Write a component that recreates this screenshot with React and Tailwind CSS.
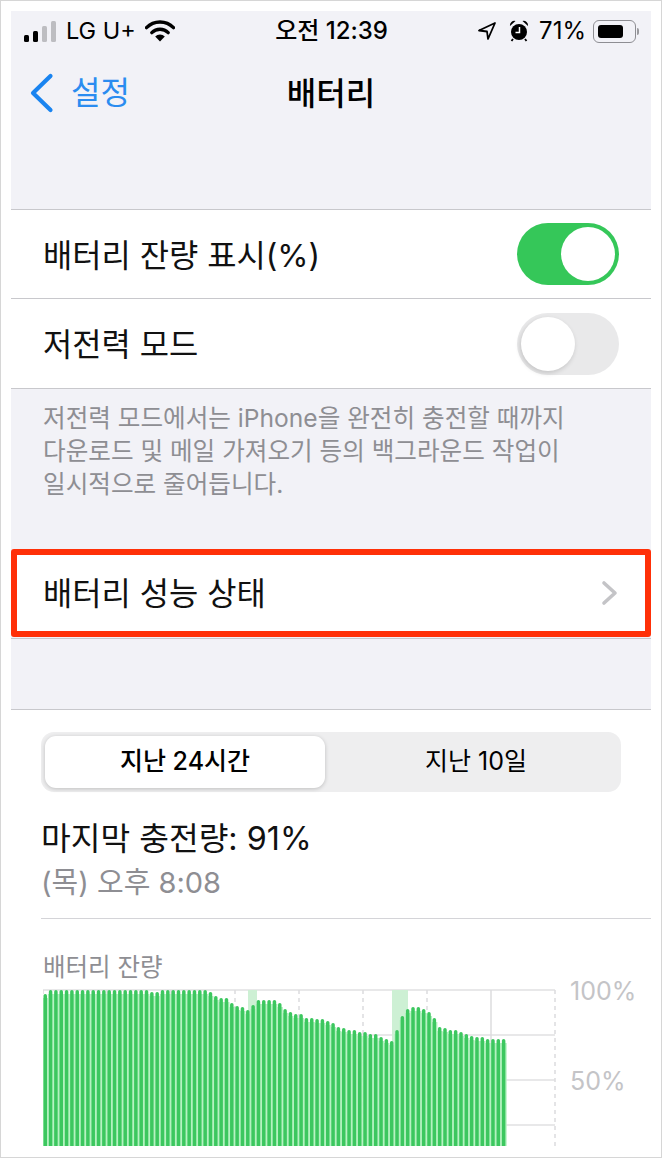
const tops = [995,991,991,991,991,991,991,991,991,991,991,991,991,991,991,991,991,991,991,991,993,993,991,991,991,991,991,991,991,991,991,993,997,999,999,1004,1007,1008,1011,1006,1001,1001,1001,1001,1004,1010,1013,1015,1015,1019,1019,1020,1020,1022,1024,1028,1029,1031,1031,1033,1033,1035,1035,1038,1040,1042,1031,1017,1010,1008,1008,1010,1013,1019,1028,1029,1031,1031,1033,1035,1037,1038,1038,1040,1040,1040,1040];

const BAR_START = 43.5;
const PITCH = 5.33;
const CHART_LEFT = 43;

function Chart() {
  const x = (v) => v - CHART_LEFT;
  const y = (v) => v - 990;
  return (
    <svg width="514" height="157" viewBox="0 0 514 157" className="block">
      {[991, 1036, 1081, 1126].map((v) => (
        <line key={v} x1="0" x2="512" y1={y(v)} y2={y(v)} stroke="#e0e0e2" strokeWidth="1.5" />
      ))}
      {[43, 107, 171, 235, 299, 363, 427, 555].map((v) => (
        <line key={v} x1={x(v)} x2={x(v)} y1="1" y2="157" stroke="#dcdcde" strokeWidth="1.5" strokeDasharray="4 4" />
      ))}
      <line x1={x(491)} x2={x(491)} y1="1" y2="157" stroke="#dcdcde" strokeWidth="1.5" />
      <rect x={x(248)} y="1" width="9" height="156" fill="#cdf0d4" />
      <rect x={x(392)} y="1" width="16" height="156" fill="#cdf0d4" />
      {tops.map((t, i) => (
        <rect key={`g${i}`} x={BAR_START + PITCH * i - CHART_LEFT - 1} y={y(t + 4)} width={PITCH + 0.5} height={1147 - t - 4} fill="#b4f2c0" />
      ))}
      {tops.map((t, i) => (
        <rect key={i} x={BAR_START + PITCH * i - CHART_LEFT} y={y(t)} width="3.5" height={1150 - t} rx="1.7" fill="#3cc75f" />
      ))}
    </svg>
  );
}

function Switch({ on }) {
  return on ? (
    <div className="w-[102px] h-[62px] rounded-full bg-[#35c759] flex items-center justify-end pr-[4px]">
      <div className="w-[54px] h-[54px] rounded-full bg-white" />
    </div>
  ) : (
    <div className="w-[102px] h-[62px] rounded-full bg-[#e9e9ea] flex items-center justify-start pl-[4px]">
      <div className="w-[54px] h-[54px] rounded-full bg-white shadow-[-1px_2px_5px_rgba(0,0,0,0.16)]" />
    </div>
  );
}

function StatusBar() {
  return (
    <div className="h-[44px] pb-[4px] flex items-center justify-between pl-[13px] pr-[12px] text-black text-[23.5px]">
      <div className="flex items-center w-[200px]">
        <svg width="33" height="21" viewBox="0 0 33 21" className="mr-[9px]">
          <rect x="0" y="14" width="5" height="7" rx="1.5" fill="#000" />
          <rect x="9" y="10" width="5" height="11" rx="1.5" fill="#000" />
          <rect x="18" y="5" width="5" height="16" rx="1.5" fill="#bdbdc1" />
          <rect x="27" y="0" width="5" height="21" rx="1.5" fill="#bdbdc1" />
        </svg>
        <span className="leading-none">LG U+</span>
        <svg width="30" height="22" viewBox="0 0 30 22" className="ml-[9px]">
          <path d="M1.5 7.6 A19 19 0 0 1 28.5 7.6" fill="none" stroke="#000" strokeWidth="3.4" strokeLinecap="round" />
          <path d="M6.8 12.6 A11.6 11.6 0 0 1 23.2 12.6" fill="none" stroke="#000" strokeWidth="3.4" strokeLinecap="round" />
          <path d="M15 21.5 L10.2 16.6 A6.8 6.8 0 0 1 19.8 16.6 Z" fill="#000" />
        </svg>
      </div>
      <span className="text-[24px] font-medium leading-none">오전 12:39</span>
      <div className="flex items-center justify-end w-[200px]">
        <svg width="20" height="20" viewBox="0 0 20 20" className="mr-[12px]">
          <path d="M18 2 L2 9.5 L10 10.5 L11 18 Z" fill="none" stroke="#000" strokeWidth="1.8" strokeLinejoin="round" />
        </svg>
        <svg width="20" height="22" viewBox="0 0 20 22" className="mr-[10px]">
          <circle cx="10" cy="12" r="8" fill="#000" />
          <path d="M1 6 A4.5 4.5 0 0 1 6.5 1 Z M19 6 A4.5 4.5 0 0 0 13.5 1 Z" fill="#000" />
          <path d="M4 19 L2.5 21 M16 19 L17.5 21" stroke="#000" strokeWidth="1.8" />
          <path d="M10.5 7 V12.5 H6.5" fill="none" stroke="#fff" strokeWidth="1.5" />
        </svg>
        <span className="text-[24px] leading-none">71%</span>
        <div className="flex items-center ml-[7px]">
          <div className="w-[43px] h-[23px] rounded-[6px] border-[1.5px] border-[#8e8e93] p-[4px]">
            <div className="w-[25px] h-full rounded-[3px] bg-black" />
          </div>
          <div className="w-[2px] h-[7px] ml-[1px] rounded-r-full bg-[#9a9a9e]" />
        </div>
      </div>
    </div>
  );
}

export default function App() {
  return (
    <div
      className="w-[662px] h-[1158px] bg-white border border-[#d6d6d6] pt-[10px] pb-[10px] px-[10px] overflow-hidden"
      style={{ fontFamily: '"Inter", "Noto Sans CJK KR", sans-serif' }}
    >
      <div className="w-[640px] h-[1136px] bg-[#f2f2f7] flex flex-col overflow-hidden">
        <StatusBar />
        <div className="h-[76px] relative flex items-center justify-center pt-[2px]">
          <div className="absolute left-[18px] top-0 bottom-0 flex items-center">
            <svg width="26" height="40" viewBox="0 0 26 40">
              <path d="M21.5 3 L4 20 L21.5 37" fill="none" stroke="#1a84f0" strokeWidth="4.2" strokeLinecap="round" strokeLinejoin="round" />
            </svg>
            <span className="ml-[16px] text-[32px] leading-none text-[#2a8cf0]">설정</span>
          </div>
          <span className="text-[32px] leading-none font-medium text-black">배터리</span>
        </div>
        <div className="h-[78px]" />
        <div className="bg-white border-y border-[#c8c8cc]">
          <div className="h-[89px] flex items-center justify-between pl-[32px] pr-[32px] border-b border-[#c8c8cc] text-[31.8px] text-[#111]">
            <span className="pt-[3px]">배터리 잔량 표시(%)</span>
            <Switch on />
          </div>
          <div className="h-[89px] flex items-center justify-between pl-[32px] pr-[32px] text-[31.8px] text-[#111]">
            <span className="pt-[3px]">저전력 모드</span>
            <Switch />
          </div>
        </div>
        <div className="h-[160px] pt-[13px] pl-[32px] text-[24.6px] leading-[33px] text-[#8e8e93]">
          <p>저전력 모드에서는 iPhone을 완전히 충전할 때까지</p>
          <p>다운로드 및 메일 가져오기 등의 백그라운드 작업이</p>
          <p>일시적으로 줄어듭니다.</p>
        </div>
        <div className="h-[88px] bg-white border-[6px] border-[#ff3008] rounded-[3px] flex items-center justify-between pl-[26px] pr-[26px] text-[31.8px] text-[#111]">
          <span className="pt-[2px]">배터리 성능 상태</span>
          <svg width="18" height="26" viewBox="0 0 18 26">
            <path d="M3 3 L14 13 L3 23" fill="none" stroke="#c4c4c7" strokeWidth="3.6" strokeLinecap="round" strokeLinejoin="round" />
          </svg>
        </div>
        <div className="h-[1px] mt-[1px] bg-[#c8c8cc]" />
        <div className="h-[70px]" />
        <div className="flex-1 bg-white border-t border-[#c8c8cc] pl-[30px] pt-[22px] overflow-hidden">
          <div className="w-[580px] h-[60px] rounded-[13px] bg-[#eeeeef] p-[4px] flex">
            <div className="w-[280px] h-[52px] rounded-[11px] bg-white shadow-[0_1px_4px_rgba(0,0,0,0.2)] flex items-center justify-center text-[25px] font-medium text-black">
              지난 24시간
            </div>
            <div className="flex-1 flex items-center justify-center pl-[10px] text-[25px] text-black">
              지난 10일
            </div>
          </div>
          <div className="mt-[26px] text-[32.3px] leading-[42px] text-[#111]">마지막 충전량: 91%</div>
          <div className="mt-[3px] text-[29px] leading-[40px] text-[#8e8e93]">(목) 오후 8:08</div>
          <div className="mt-[15px] h-[1px] bg-[#d4d4d8]" />
          <div className="mt-[31px] pl-[2px] text-[24.5px] leading-[34px] text-[#8e8e93]">배터리 잔량</div>
          <div className="flex items-start pl-[2px] mt-[5px]">
            <Chart />
            <div className="ml-[13px] -mt-[12px] w-[70px] text-[25px] text-[#c4c4c7] leading-[28px]">
              <div>100%</div>
              <div className="mt-[62px]">50%</div>
            </div>
          </div>
        </div>
      </div>
    </div>
  );
}
